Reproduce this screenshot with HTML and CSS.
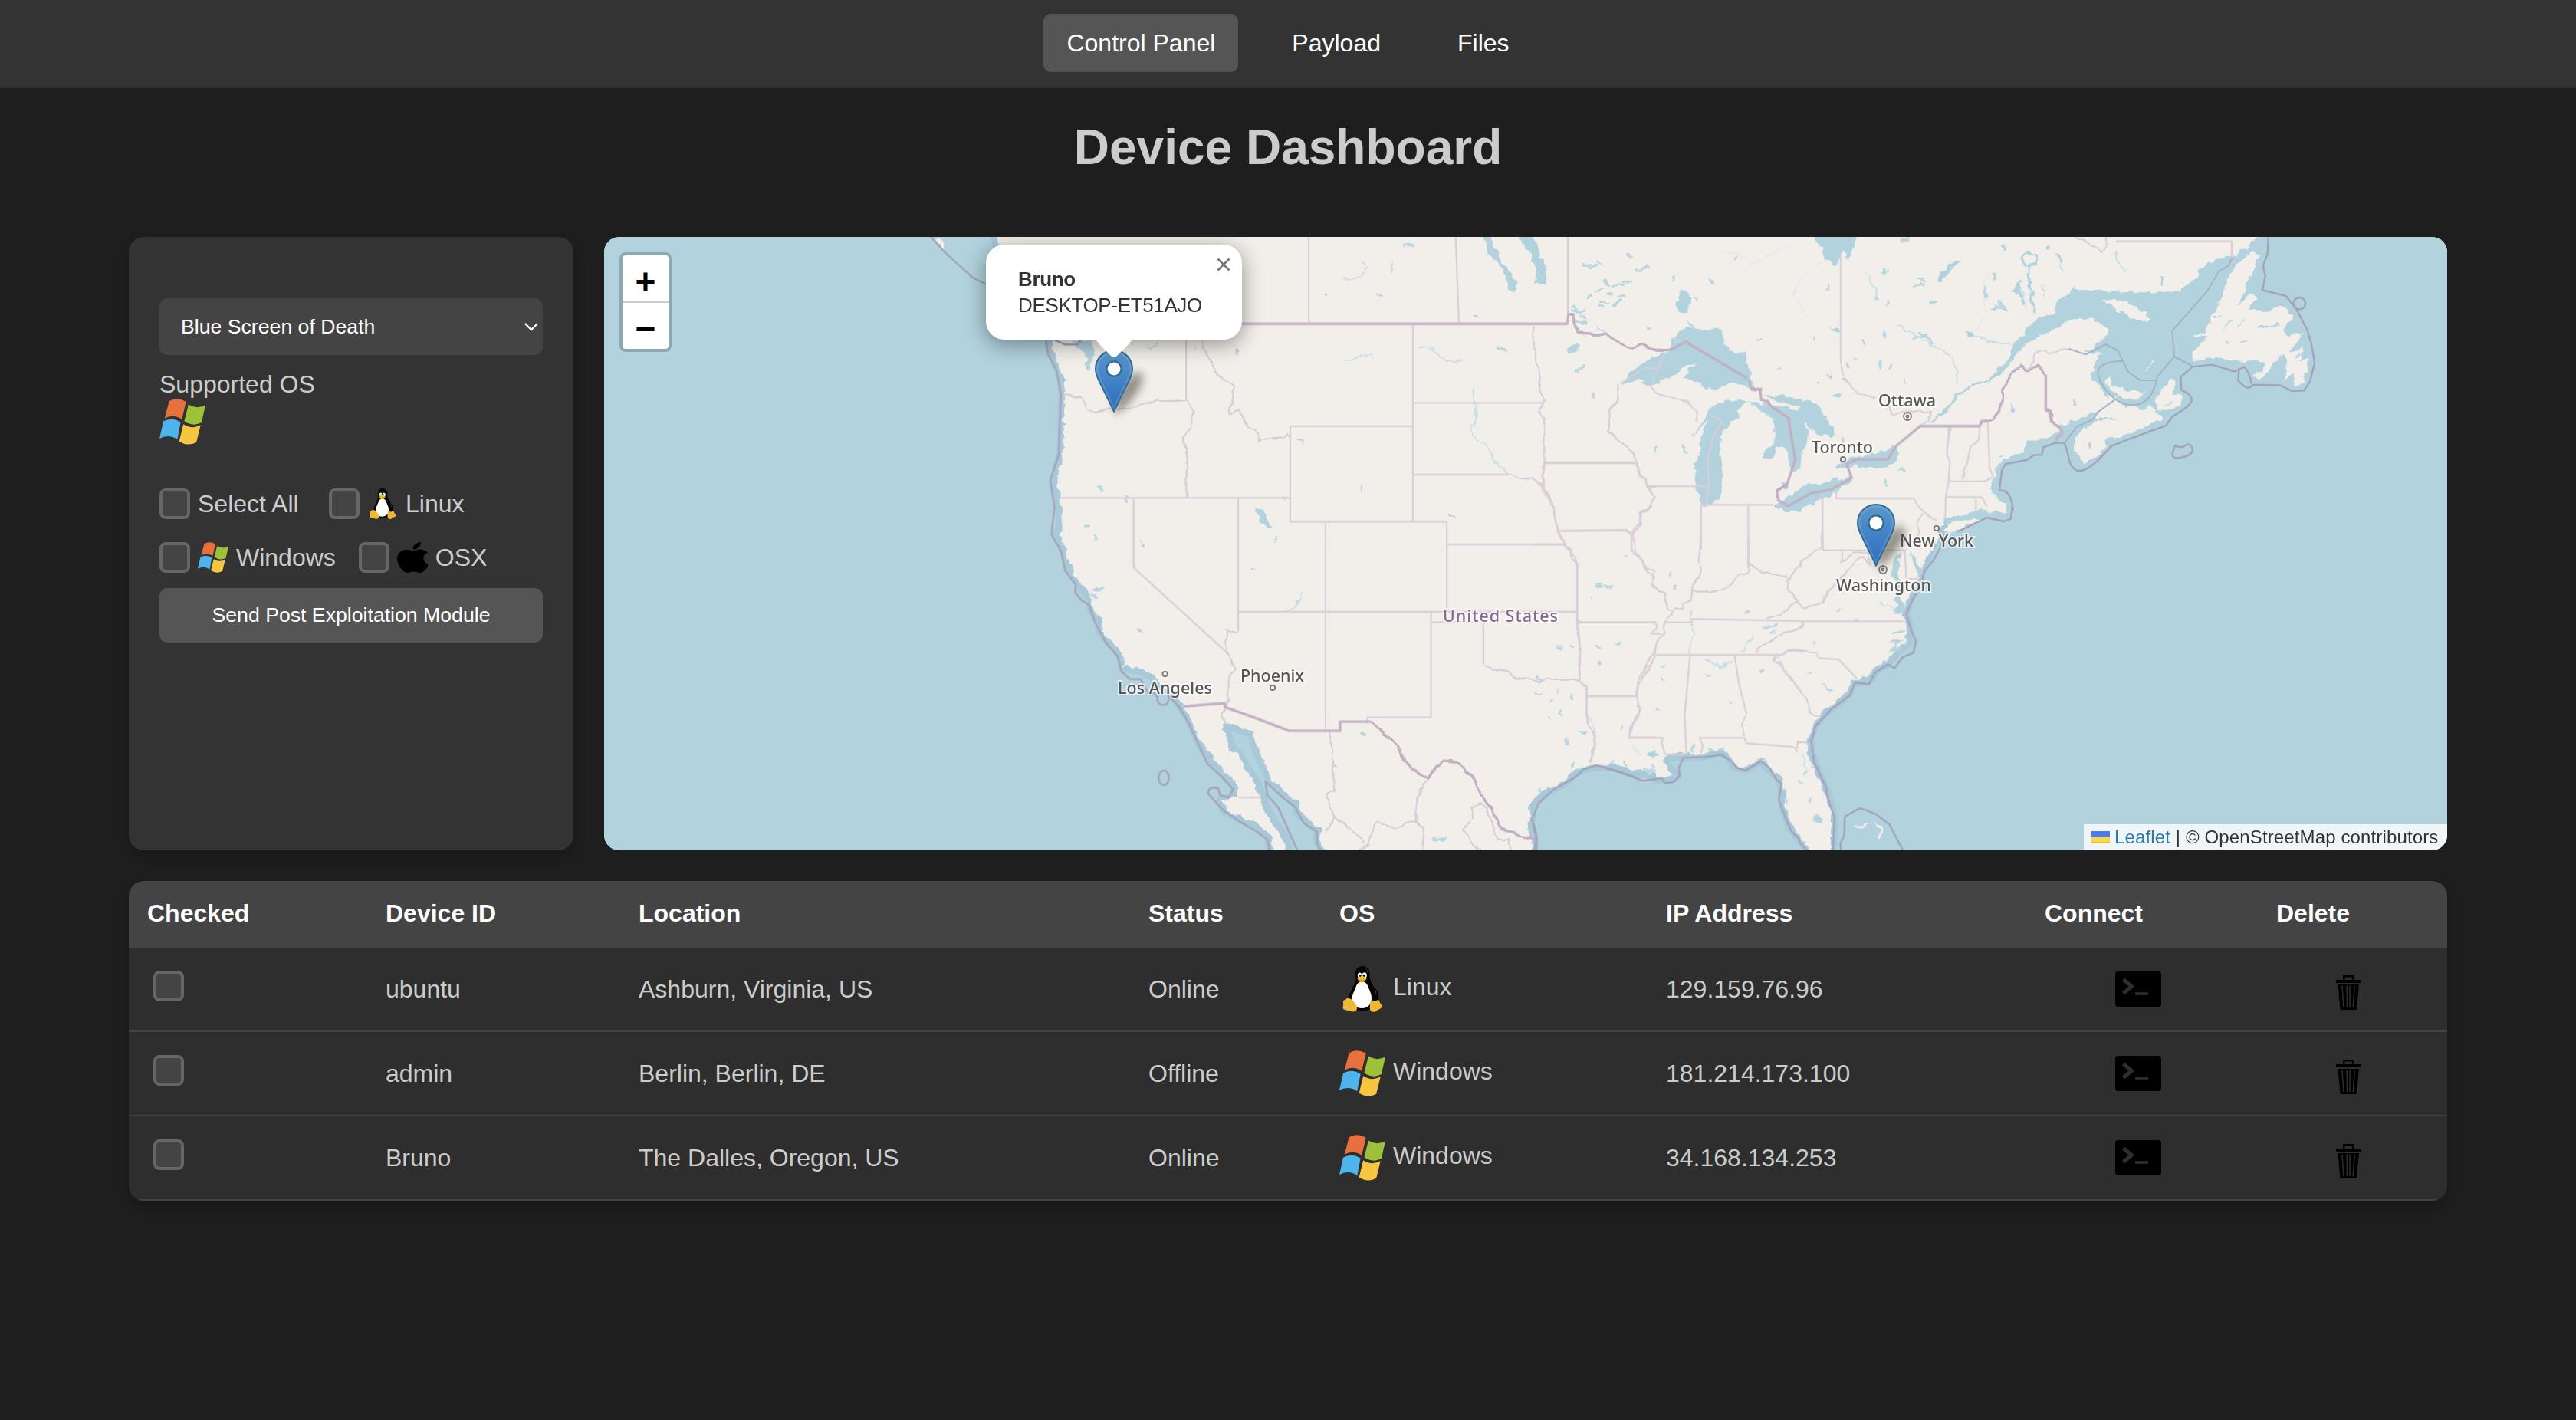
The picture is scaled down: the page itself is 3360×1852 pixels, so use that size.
FILE: index.html
```html
<!DOCTYPE html>
<html lang="en">
<head>
<meta charset="utf-8">
<title>Device Dashboard</title>
<link rel="stylesheet" href="styles.css">
</head>
<body>
<svg class="defs" aria-hidden="true">
  <symbol id="windows" viewBox="0 0 60 60">
    <path fill="#e8703c" d="M12.6 3.2Q23.5-3 34.7 3.9L29.2 26.8Q18 19.5 6.7 25.7Z"/>
    <path fill="#9dc23a" d="M37.9 7.5Q49 14.5 60 8.2L54.9 31Q43.500 37 32.400 29.300Z"/>
    <path fill="#4fb3ec" d="M5.100 29.600Q16.500 23.400 27.600 30.700L23.300 53.200Q12 45.500 0 52.100Z"/>
    <path fill="#f8c540" d="M31.200 33.200Q42.500 40.500 53.700 34.300L48.200 56.800Q37 63 25.700 55.400Z"/>
  </symbol>
  <symbol id="tux" viewBox="0 0 60 60">
    <path fill="#050505" d="M30 0c6 0 9.500 4.500 9.500 10.500 0 5 .5 8 3.500 12 5 7 8.500 13.500 8.500 21 0 9-9 14.500-21.500 14.500S11 54 12 43c.7-7 3.500-11 6.500-17 3-5.500 3-9 2.600-15C20.700 4 24 0 30 0z"/>
    <path fill="#fff" d="M29.500 20c3.500 0 6.500 2 8 7 2 5 4.500 9 4.500 15 0 8-5 13-12.500 13S17 50.500 16.500 43c0-6 3-9.500 4.800-15 1.400-4.500 4-8 8.200-8z"/>
    <ellipse cx="26.500" cy="12" rx="2.700" ry="3.600" fill="#f5f5f5"/><ellipse cx="32.800" cy="12" rx="3" ry="3.800" fill="#f5f5f5"/>
    <circle cx="27.200" cy="12.600" r="1.300"/><circle cx="32" cy="12.600" r="1.400"/>
    <path fill="#f2b91f" d="M23.500 16.500c2-1.800 4.500-3.200 6.200-3 2 .2 5 1.800 6 3-1 2.200-4.200 5-6.500 5s-4.700-2.500-5.700-5z"/>
    <path fill="none" stroke="#a86f0a" stroke-width=".7" d="M24 17.300c2.500 1.800 7.500 2 11 0"/>
    <path fill="#efb736" d="M10.500 42c2.500-.5 5.500.5 8 4 2.500 4 5 6 4.500 9.500-.6 4-4.500 5-9 3.300-4-1.500-8.500-1.300-9.300-3.800-.6-2 1-4 .3-7-.5-3 1-3.500 2.800-4.200 1.200-.6 1.500-1.500 2.700-1.800zM42 42.500c.8 2.800 3.500 4.500 6.500 2.500 1.500-1.500 3.500-1.500 4 1.500.5 2.500 3.500 4.500 3.800 6.200.2 2.300-5 3.300-7.800 5.800-2.500 2-7.500 2-8.500-2-.8-4 .3-8 2-14z"/>
    <path fill="none" stroke="#444" stroke-width=".9" d="M42 20c3 5 5.500 11 6 17M34 3.500c1.800 1 2.700 3 2.700 5"/>
  </symbol>
  <symbol id="apple" viewBox="4 32 366 448" preserveAspectRatio="none">
    <path d="M318.700 268.700c-.2-36.700 16.400-64.400 50-84.800-18.800-26.900-47.200-41.700-84.700-44.600-35.500-2.800-74.300 20.700-88.500 20.700-15 0-49.400-19.700-76.400-19.700C63.300 141.200 4 184.800 4 273.500q0 39.300 14.400 81.200c12.800 36.700 59 126.700 107.200 125.200 25.200-.6 43-17.900 75.800-17.900 31.800 0 48.300 17.900 76.400 17.900 48.600-.7 90.400-82.500 102.600-119.300-65.200-30.700-61.700-90-61.700-91.900zm-56.600-164.200c27.300-32.400 24.800-61.900 24-72.500-24.100 1.400-52 16.400-67.900 34.900-17.500 19.800-27.800 44.300-25.600 71.900 26.100 2 49.900-11.400 69.500-34.300z"/>
  </symbol>
  <symbol id="terminal" viewBox="0 0 60 46">
    <rect width="60" height="46" rx="4"/>
    <path d="M10.500 10.500 21.500 19.500 10.500 28.500" fill="none" stroke="#2e2e2e" stroke-width="5"/>
    <path d="M26 29H43" stroke="#2e2e2e" stroke-width="3.600"/>
  </symbol>
  <symbol id="trash" viewBox="0 0 32 45">
    <path d="M10.300 7V1.300H22.200V7" fill="none" stroke="#000" stroke-width="2.400"/>
    <path d="M0 6H32V10H0zM2.500 12H30L26.800 45H5.500z"/>
    <path d="M8 13.500 10 42M14.200 13.500 14.500 42M18 13.500V42M24.200 13.500 22.200 42" fill="none" stroke="#2e2e2e" stroke-width="1.500"/>
  </symbol>
  <symbol id="pin" viewBox="-1 -1 60 84">
    <path d="M25 1C11.600 1 1 11.600 1 25c0 5 1.700 9.300 3.600 13.800L25 80.500 45.400 38.800C47.300 34.300 49 30 49 25 49 11.600 38.400 1 25 1z" fill="url(#pinfill)" stroke="#2e6c97" stroke-width="2"/>
    <path d="M25 3.200C13 3.200 3.200 13 3.200 25c0 4.600 1.600 8.700 3.400 13L25 75.500 43.400 38c1.800-4.300 3.400-8.400 3.400-13C46.800 13 37 3.200 25 3.200z" fill="none" stroke="#fff" stroke-opacity=".13" stroke-width="2.400"/>
    <circle cx="25" cy="25" r="9.600" fill="#fff" stroke="#2e6c97" stroke-width="2.400"/>
  </symbol>
  <linearGradient id="pinfill" x1="0" y1="0" x2="0" y2="1"><stop offset="0" stop-color="#5a98cb"/><stop offset="1" stop-color="#2b6cbd"/></linearGradient>
</svg>

<nav class="nav">
  <a class="nav-link active">Control Panel</a>
  <a class="nav-link">Payload</a>
  <a class="nav-link">Files</a>
</nav>

<h1 class="title">Device Dashboard</h1>

<main class="content">
  <div class="top">
    <section class="panel">
      <div class="select"><span>Blue Screen of Death</span>
        <svg class="chevron" viewBox="0 0 18 11"><path d="M1.500 1.500 9 9 16.500 1.500" fill="none" stroke="#fff" stroke-width="2.400" stroke-linecap="round"/></svg>
      </div>
      <div class="supported">Supported OS</div>
      <svg class="icon60"><use href="#windows"/></svg>
      <div class="filters">
        <div class="filter-row">
          <label class="filter first"><span class="check"></span>Select All</label>
          <label class="filter"><span class="check"></span><svg class="icon40"><use href="#tux"/></svg>Linux</label>
        </div>
        <div class="filter-row">
          <label class="filter"><span class="check"></span><svg class="icon40"><use href="#windows"/></svg>Windows</label>
          <label class="filter"><span class="check"></span><svg class="icon40"><use href="#apple"/></svg>OSX</label>
        </div>
      </div>
      <div class="send">Send Post Exploitation Module</div>
    </section>

    <section class="map">
      <svg class="map-canvas" viewBox="788 309 2404 800">
        <defs>
          <filter id="rough" x="-2%" y="-2%" width="104%" height="104%" color-interpolation-filters="sRGB">
            <feTurbulence type="fractalNoise" baseFrequency=".09" numOctaves="3" seed="4"/>
            <feDisplacementMap in="SourceGraphic" scale="10" xChannelSelector="R" yChannelSelector="G"/>
          </filter>
          <filter id="wobble" x="-2%" y="-2%" width="104%" height="104%" color-interpolation-filters="sRGB">
            <feTurbulence type="fractalNoise" baseFrequency=".06" numOctaves="2" seed="9"/>
            <feDisplacementMap in="SourceGraphic" scale="8" xChannelSelector="R" yChannelSelector="G"/>
          </filter>
          <path id="west" d="M34 10 60 120 165 272 168 300 180 340 190 365 195 410 193 430 192 500 190 560 182 590 175 625 182 668 188 700 188 740 180 760 195 790 205 830 225 870 240 890 255 915 262 950 282 970 280 1000 310 1035 325 1050 333 1085 375 1095 400 1110 420 1135 445 1155 462 1170 470 1190 485 1215 500 1250 510 1275 525 1300 545 1325 565 1350 590 1375 598 1410 580 1420 560 1425 570 1445 600 1462 640 1480 670 1505 680 1560H712L700 1515 680 1485 655 1440 648 1410 635 1380 610 1340 595 1310 580 1300 570 1270 563 1230 580 1228 600 1240 632 1250 638 1280 650 1310 665 1345 672 1365 690 1385 715 1410 735 1425 740 1450 770 1480 790 1495 785 1520 810 1560H1275L1280 1520 1268 1490 1275 1460 1270 1445 1285 1415 1310 1390 1345 1370 1375 1345 1400 1332 1430 1325 1470 1330 1510 1345 1568 1355V10Z"/>
          <path id="southeast" d="M-20-40H1190L1165 20 1150 60 1130 130 1120 190 1095 240 1080 300 1090 340V410L1060 440 1030 490 1000 510 980 550 930 565 915 610 880 650 835 700 815 740 802 790 805 850 825 920 850 1000 865 1060 873 1130 865 1250H820L790 1190 755 1130 735 1050V990L725 940 690 900 670 865 650 875 625 900 595 895 570 850 545 835 490 850 450 848 385 855 375 880 390 910 412 935 360 940 340 915 300 920 250 895 190 890 160 895 120 915 85 960 35 990-20 1030Z"/>
        </defs>
        <rect class="sea" x="780" y="300" width="2420" height="820"/>
        <g class="shelf">
          <g transform="translate(1280 300) scale(.56122 .52296)"><use href="#west"/></g>
          <g transform="translate(2000 700) scale(.44643 .33333)"><use href="#southeast"/></g>
        </g>
        <g class="land" filter="url(#rough)">
          <g transform="translate(1280 300) scale(.56122 .52296)"><use href="#west"/></g>
          <g transform="translate(2000 700) scale(.44643 .33333)">
            <use href="#southeast"/>
            <path d="M935 1135 955 1125 985 1122 980 1130 945 1137ZM1000 1110 1020 1135 1018 1180 1010 1180 1012 1145Z"/>
          </g>
          <g transform="translate(2000 300) scale(.44643 .33333)">
            <path d="M-20 0H1568V760L1530 765 1510 800 1440 830 1430 870 1380 890 1350 930 1345 980 1335 1010 1355 1055 1385 1070V1110L1310 1095 1200 1130 1185 1170 1180 1210 1170 1250 1150 1280 1130 1340H-20Z"/>
            <path d="M1195 1180 1220 1145 1300 1130 1310 1138 1230 1180Z"/>
          </g>
          <g transform="translate(2600 300) scale(.39541 .33333)">
            <path d="M-40 0H890L840 70 785 105 740 115 680 150 670 190 620 235 520 250 440 240 300 235 245 235 210 280 200 330 140 345 90 410 50 470-40 600Z"/>
            <path d="M-20 610 50 530 80 470 140 410 200 375 260 345 320 345 375 385V415L320 470 290 478 355 475 340 520 320 565 345 600 370 645 400 660 440 690 500 700 515 688 540 710 560 740 500 770 410 815 375 810 370 850 300 915 265 860 270 810 330 750 410 733 335 735 345 712 280 745 220 760 215 790 160 820 100 830 40 880 20 920-20 950Z"/>
            <path d="M360 270 410 275 480 305 520 350 510 358 460 350 410 310ZM385 570 390 610 440 630 500 630 470 670 400 640 365 600ZM590 570 600 590 590 640 625 650 620 680 575 710 540 700 535 660 560 620Z"/>
            <path d="M855 90 880 95 865 130 830 230 810 290 845 250 875 270 840 310 900 320 950 295 990 340 960 390 970 420 1020 405 1000 440 975 480 1025 460 1010 520 1040 500 1025 605H985L990 560 955 590 970 540 960 490 920 520 890 575 850 580 880 550 900 520 850 515 800 510 720 500 665 510 655 480 710 420 665 418 670 405 695 410 720 330 740 300 770 200 810 120Z"/>
          </g>
          <path d="M1219 312 1228 312 1232 326 1226 324Z"/>
        </g>

        <g class="lakes" filter="url(#rough)">
          <g transform="translate(1280 300) scale(.56122 .52296)">
            <path d="M640 690 655 700 662 722 682 738 665 745 645 722ZM1165 10 1180 60 1215 100 1225 150 1245 150 1245 125 1215 85 1190 40 1185 10ZM1245 10 1275 60 1290 100 1290 135 1312 138 1312 90 1290 50 1280 10ZM1360 295 1375 285 1390 290 1375 305ZM210 276 255 276 262 300 252 350 240 352 248 320 232 300Z"/>
            <path d="M1548 1300 1568 1295V1312L1550 1312ZM370 770 378 785 374 792ZM350 828 357 832 354 842ZM590 295 597 300 592 318Z"/>
          </g>
          <g transform="translate(2000 300) scale(.44643 .33333)">
            <path d="M800 0 845 65 850 115 882 138 905 85 925 120 945 20Z"/>
            <path d="M255 600 300 540 350 495 400 470 405 430 445 375 500 390 548 392 565 460 600 480 625 475 622 520 638 545 632 580 645 590V620L610 605 570 600 535 625 500 620 485 595 440 585 455 545 480 525 445 530 405 580 370 595 340 610 318 600 325 580 290 595Z"/>
            <path d="M465 810 520 690 570 665 610 665 625 680 600 700V735L570 770 550 790 545 860 555 950 550 1030 520 1080 490 1075 475 1000 470 930 490 850 495 790 510 740 490 770Z"/>
            <path d="M620 675 670 680 690 690 740 690 770 710 785 690 830 680 860 750 885 790 870 815 820 790 785 740 805 790 800 840 785 870 780 930 755 955 745 900 735 850 710 850 700 890 675 890V865L700 840 705 770 700 740 680 720 650 690ZM670 640 720 650 770 660 830 680 790 690 720 670Z"/>
            <path d="M700 1075 730 1060 790 1000 820 990 850 990 880 975 925 965V985L870 1040 800 1080 780 1100 745 1105 715 1090ZM728 990 745 1000 740 1018 722 1010ZM880 935 915 900 960 880 1010 870 1050 840 1065 860V905L1035 930 980 930 930 925Z"/>
            <path d="M430 235 455 240 460 290 450 320 425 315 412 285 425 275ZM1585 220 1530 280 1520 330 1480 340 1440 390 1405 445 1390 500 1355 550 1335 580 1360 572 1395 520 1420 470 1470 420 1520 385 1585 345Z"/>
            <path d="M1180 200 1195 155 1235 115 1245 125 1215 165 1190 205ZM98 465 130 450 128 475 100 480ZM1265 395 1290 405 1280 425 1268 415ZM865 375 880 385 905 400 880 400ZM870 640 900 640 885 652ZM1400 240 1420 200 1425 260ZM10 120 30 110 38 180 20 220 8 200Z"/>
            <path d="M0 30 15 80 20 120 5 110-20 60ZM1210 770 1218 775 1214 830ZM1060 1270 1075 1265 1062 1340 1050 1340Z"/>
          </g>
          <g transform="translate(2000 700) scale(.44643 .33333)">
            <path d="M1070 70 1058 105 1068 150 1075 190 1068 230 1085 265 1082 305 1045 290 1068 270 1055 235 1062 200 1048 140 1052 100ZM1100 50 1112 90 1135 125 1128 150 1105 100ZM818 1100 832 1085 843 1105 830 1122ZM340 845 355 838 372 855 345 862ZM1030 450 1085 405 1040 410 1080 440ZM1045 375 1090 365 1060 382Z"/>
          </g>
        </g>

        <g class="streams" filter="url(#rough)">
          <g transform="translate(1280 300) scale(.56122 .52296)">
            <path d="M1143 390 1148 460 1140 510 1180 545 1195 580 1225 608M1020 292 1050 298 1080 330 1118 325M840 122 880 118 900 95 885 80M953 75V105M845 330 880 315 905 305 912 325M745 905 728 940 705 952M412 270 398 300 385 290M495 290 500 300"/>
          </g>
          <g transform="translate(2000 300) scale(.44643 .33333)">
            <path class="bold" d="M1340 580 1280 610 1235 650 1210 700 1160 750"/>
            <path d="M1060 370 1180 460 1230 500 1240 600M1290 415 1330 430 1395 455M1450 140 1448 250 1465 330M1425 200 1430 260 1440 300M980 180 1002 230V270"/>
            <path class="thin" d="M845 120 780 200 760 250 800 340M550 75 600 95 640 135 690 100 760 50M930 130 980 180M1320 150V330L1290 400"/>
          </g>
          <g transform="translate(2000 700) scale(.44643 .33333)">
            <path d="M460 290 465 380 455 460M500 480 550 510 585 480M640 385 610 450M165 710 182 770M790 840 795 920M710 470 760 570M1010 262 1050 280"/>
            <path class="thin" d="M280 790 310 860"/>
          </g>
          <g transform="translate(2600 300) scale(.39541 .33333)">
            <path class="bold" d="M95 110Q100 85 120 85T145 110 122 140 95 110M118 140 122 230 135 320M90 200 85 240 100 290"/>
            <path d="M215 100 228 165M400 90 430 170M165 210V260M810 380 830 350M755 390 790 345M570 690 590 670"/>
            <path d="M505 548 535 510" stroke="#f2efea"/>
          </g>
        </g>

        <g class="ponds" filter="url(#rough)">
          <g transform="translate(1280 300) scale(.56122 .52296)">
            <path d="M985 37l20 2M1200 295l16 4M1365 300l20-8M1385 350l15-6M1420 408l6 4M740 525l8 4M920 158l10 4M275 640l5 8M337 665v12M685 765v12M630 842l6 3M705 665l3 8M365 998l6 2M255 905l12 16M1340 1045l10-8M1300 1120l10 4M1290 1155h10M1360 1275l6 8M1390 1245l16 10M1050 1520h30M880 1255l12 2M1090 710l8 4M1400 85h14M1430 150l14-4M1490 130h20M1525 100l30-8M1440 175l20 6M1470 190l12-14M1500 60l10 10M1375 200l25 0M1385 225l20 8M1410 170l8-8M797 160h4M1145 215h10M263 895l20 0M240 738h8M265 763v8M820 1338h4M885 640v8M1390 975l5 4M1425 885l20 5"/>
          </g>
          <g transform="translate(2000 300) scale(.44643 .33333)">
            <path d="M190 125l8 12M165 145l20-4M300 160l40-18M205 200l20 14M235 220l30-5M215 250l12 6M190 290l15 8M250 260h20M120 300l15 16M140 330l12 14M115 350l20 8M190 380l14 10M330 375l10 6M410 180v12M470 265l6 8M520 198v8M590 100v6M860 215v18M140 545l10-18M175 640v10M440 850l4 24M1070 937l16 4M1080 35h16M1375 65v20M1025 150v30M1020 170l14-10M1345 170v20M1125 190l16 8M1110 215l30-4M1165 280h10M1130 400l10 14M1110 425l40-14M1150 420l10 16M1340 310l30-10M1360 290l20 30M960 435l6 6M935 507h10M915 530l8 4M1015 515v24M1045 530v14M865 560l4 20M835 598h4M1085 585v8M1025 400v20M820 420v8M1000 270l8 8M1035 280v10M905 580l18 20M1398 690l4 20M1030 970l4 30M360 850v14M905 815v14M655 430l10-4M1320 220v40M1500 60v8M455 365l12 12M420 425v12M715 545h6"/>
          </g>
          <g transform="translate(2000 700) scale(.44643 .33333)">
            <path d="M180 185h20M210 190l14 6M172 238v6M70 430l10 10M110 430l6 2M185 430l10 6M190 494h8M245 415l10 3M400 142v8M415 195v8M380 505v4M375 555h6M505 540h8M670 520v6M800 538h6M850 575l20 28M572 640v6M362 670v4M822 410v8M940 322l14 10M620 298l12-4M670 355l40-8M695 375l8-2M140 760l12 16M95 795l6 18M45 708v4M55 635v6M10 550l16 6M80 685v10M110 620v8M255 745v4M890 285h4M270 75h6M465 820v18M115 890v16M230 880v10M265 885l10 14M325 910l30 10M350 890v10M515 830l10 8M540 832h12M735 1030l8 10M790 920v8M780 960l6 6M808 1028v6M20 985v12M70 600v4"/>
          </g>
          <g transform="translate(2600 300) scale(.39541 .33333)">
            <path d="M30 65l8 20M175 60l8 8M215 100l6 20M0 185l6 10M60 685l6 24M10 300l30 10M20 280l14 20M555 185v24M270 670v16M320 840v8M820 440h10M770 438h6M20 880v6M80 240v14M880 380l60-6M1000 490l12 0M730 345l20-8"/>
          </g>
        </g>

        <g class="states">
          <g transform="translate(1280 300) scale(.56122 .52296)">
            <path d="M761 10V232M1102 10 1110 232M1363 10V209M476 272V420M182 668H718M354 668V842L572 1055M597 668V1000M597 952H1385M1003 489H718V727H1082V952M1003 236V727M800 727V1248M1003 431H1306M1003 610H1225M1083 784H1355M1309 580H1520M1338 750 1500 748 1512 760M1385 832V1000M1385 978H1568M1045 952V1215H897V1226M1043 978H1167V1082M1407 1135V1215M1407 1162H1523M1506 1265H1568M598 1415H648M1545 640H1568"/>
          </g>
          <g transform="translate(2000 300) scale(.44643 .33333)">
            <path d="M898 90V520M343 612 385 480M255 600 325 540H365M28 912H297M335 1002H510M553 745 525 810 510 890 513 1002 505 1075M515 725 553 745M490 1075H700M490 1075V1250M628 1075V1320M845 1030V1253H1090M885 1005V1050H1110M1215 767 1208 880 1217 905 1213 985 1205 1045 1203 1130M1328 745 1333 930 1345 970M1217 983H1320L1340 968M1205 1045H1310L1325 1080M1293 1050V1105M70 1178 270 1175 290 1195M0 1230H90"/>
          </g>
          <g transform="translate(2000 700) scale(.44643 .33333)">
            <path d="M128 105V335L135 400V560M128 335H357L362 355 344 379H374M158 624H303M155 580V705M281 787H378L375 807 385 852M490 0 483 100M628 0V105M388 335H463V322L685 327 788 330H1082M355 462H715M458 462 442 700 447 850M588 462 600 570 622 690M618 787H485L495 817 490 847M618 787 622 808 760 822M832 475 892 480 945 555M1085 55 1090 165H1130M845 0V53M385 852 440 852"/>
          </g>
          <g transform="translate(2600 300) scale(.39541 .33333)">
            <path d="M405 44H786V110"/>
          </g>
        </g>
        <g class="states" filter="url(#wobble)">
          <g transform="translate(1280 300) scale(.56122 .52296)">
            <path d="M514 272 516 295 530 325 545 352 570 375 587 387 585 420 576 440 578 458 600 448 612 480 635 500 645 525 665 518 700 515 712 508 718 520M476 420 480 428 497 450 490 480 470 515 472 535 478 545 476 668M190 410 230 418 245 445 265 455 300 445 340 445 370 435 400 428 478 428M597 1000 592 1005 570 997V1022L572 1055 592 1097 577 1112 572 1142 577 1172 565 1185M1225 608 1250 622 1280 620 1308 638M1281 236 1285 290 1295 350 1300 400 1306 430 1296 450 1308 470 1309 580 1303 590 1306 635 1325 680 1338 750 1355 784 1372 800 1370 815 1385 832M1385 1000 1392 1040 1390 1130M1167 1082 1192 1097 1222 1102 1247 1117 1277 1122 1297 1130 1317 1118 1342 1123 1372 1121 1392 1131 1407 1139M1407 1215 1428 1265 1420 1300 1415 1330M1568 1060 1545 1100 1525 1150 1530 1200 1508 1240 1506 1265M1478 385V425L1458 450 1460 505 1485 530 1518 560 1524 590 1550 640 1565 670 1555 695 1530 710 1532 735 1512 760 1520 800 1545 845 1568 870M808 1250 818 1300 818 1360 820 1400 800 1405 820 1465 840 1475 862 1500 890 1530M820 1465 800 1500M1038 1370 1010 1415 1012 1475 990 1480 960 1490 920 1478 900 1530 875 1547M1012 1475 1030 1490 1025 1547M1120 1495 1145 1470 1140 1440 1160 1430 1175 1440 1185 1480 1200 1520 1225 1520 1228 1547M1120 1495 1135 1520 1160 1547M565 1185 560 1210 568 1232"/>
          </g>
          <g transform="translate(2000 300) scale(.44643 .33333)">
            <path d="M898 520 905 570 940 635 1000 655M1040 690 1045 715 1160 710 1155 750 1130 767M1437 550 1460 520 1465 480 1500 470 1510 480 1568 465M343 612 360 640 450 675 475 710 480 750M297 912 305 940 335 1000 355 1050 345 1085 308 1110 312 1140 285 1190 285 1250 330 1320M1110 1050 1130 1095 1180 1140M1135 1110 1120 1150 1130 1180 1120 1220M1305 767 1300 820 1280 850 1262 930 1255 980M0 975 25 1000 45 1060 62 1110 70 1180 90 1230 110 1250 130 1310M845 1170 835 1250 785 1290 780 1320M33 912 25 960 28 990"/>
          </g>
          <g transform="translate(2000 700) scale(.44643 .33333)">
            <path d="M330 120 355 130 345 185 385 230 395 285 410 290 400 320 385 335 380 380 360 410 355 450 335 490 310 560 300 610 315 680 285 750 281 787M483 100 490 140 465 215 460 250 440 260V285L410 275M465 215 530 215 570 200 600 150 628 140 630 105 670 140 740 155 745 170 775 120 785 90M685 325 720 310 770 250 745 210 740 170M770 250 790 275 850 255 860 215 900 150 960 80 985 105 975 60 935 65 900 100V55M788 330 785 350 720 385 655 440 652 460M622 690 612 740 618 787M760 822 768 840 770 802 805 810M715 462 702 480 725 510 790 620 820 700 835 702M715 462 755 443 825 455 832 475M155 705 182 780 170 880"/>
          </g>
          <g transform="translate(2600 300) scale(.39541 .33333)">
            <path d="M250 10 275 35 295 35 320 65 345 70 360 88 375 65 370 40 380 10"/>
          </g>
        </g>

        <g class="nation">
          <g transform="translate(1280 300) scale(.56122 .52296)"><path d="M600 234H1363M470 1188 565 1180 567 1190 640 1218 715 1249H834V1226H905"/></g>
          <g transform="translate(2000 300) scale(.44643 .33333)"><path d="M400 470 445 437 625 580M695 690 745 735 765 900 745 980M713 1055 745 1080 810 1030 870 1015 930 970 915 915 945 897H1035L1060 845 1130 767H1305M1497 565V700"/></g>
        </g>
        <g class="nation" filter="url(#wobble)">
          <g transform="translate(1280 300) scale(.56122 .52296)"><path d="M905 1226 970 1285 982 1325 1038 1368 1055 1335 1075 1325 1110 1328 1140 1365 1160 1410 1185 1440 1205 1490 1245 1510 1288 1518"/></g>
          <g transform="translate(2000 300) scale(.44643 .33333)"><path d="M98 367 100 330H118L128 395 175 415 210 405 245 440 290 465 318 450 370 470 400 470M625 580 640 625 662 620 665 660 690 665 695 690M745 980 740 1000 715 1020 713 1055M1305 767 1310 745 1345 740 1368 690 1370 640 1385 595 1422 525 1437 550 1475 535 1497 565M1497 700 1512 710 1515 750 1535 765 1540 795 1525 830"/></g>
        </g>

        <g class="waters">
          <g transform="translate(1280 300) scale(.56122 .52296)">
            <path d="M150 275 155 310 175 350 185 410 180 560 160 625 170 690 163 760 185 800 195 850 220 885 218 905 235 925 250 935 265 980 290 1030 318 1065 325 1100 345 1120 370 1120 385 1150 408 1158Q408 1185 422 1185T436 1163L460 1190 480 1225 510 1295 525 1330 560 1365 585 1395 575 1415 555 1410 550 1392Q527 1386 527 1405L560 1445 600 1475 640 1500 665 1520 672 1560M740 1560 715 1500 690 1440 665 1410 660 1375 675 1390 700 1415 730 1440 750 1480 780 1500V1530L795 1560M1285 1560 1290 1515 1280 1470 1295 1430 1330 1395 1380 1365 1400 1345 1430 1335 1475 1348 1520 1365"/>
            <ellipse cx="424" cy="1366" rx="12" ry="18"/>
          </g>
          <g transform="translate(780 300) scale(.56122 .33333)"><path d="M765 10 805 85 870 185 905 215M1062 430 1085 448 1115 448 1122 432"/></g>
          <g transform="translate(2000 700) scale(.44643 .33333)">
            <path d="M10 1250 8 1160 0 1120M210 905 260 925 320 955 375 945 385 965 410 960 428 935 425 905 438 865 500 862 550 853 580 880 595 905 620 915 665 878 690 905 710 950 725 965 717 1030 740 1110 755 1155 775 1180 780 1200 805 1235M1190 40 1170 90 1140 140 1135 185 1110 240 1090 300 1100 350 1118 410 1110 455 1080 470 1055 515 1035 500 1000 530 980 578 940 570 925 620 870 675 825 740 812 800 820 880 855 980 860 1020 880 1100 875 1240M900 1240 897 1200 908 1170 910 1095 955 1062 1000 1085 1040 1125 1085 1240"/>
          </g>
          <g transform="translate(2000 300) scale(.44643 .33333)"><path d="M1400 1075 1395 1130 1375 1140 1325 1125 1240 1180M1200 1190 1190 1240"/></g>
          <g transform="translate(2600 300) scale(.39541 .33333)">
            <path d="M908 10 905 90 890 140 897 180 888 235 965 258 1000 310 1035 390 1050 450 1060 520 1045 590 1025 628 985 630 945 607 855 605Q850 617 840 617T808 590L810 545 795 553 760 540 720 527 657 535 618 575 620 625Q655 645 655 665T590 730L570 765 440 822 390 845 350 895Q310 942 285 942T250 900L245 870 235 833H205L165 850 160 880 135 880 110 900 40 915 28 940 20 1020Q45 1015 55 1045T65 1100M810 545 828 535 842 560 852 600"/>
            <ellipse cx="1010" cy="287" rx="20" ry="23"/>
            <path d="M625 850 640 838Q657 840 657 860T620 890 593 865 605 847Z"/>
          </g>
        </g>
        <g class="waters faint">
          <g transform="translate(2600 300) scale(.39541 .33333)">
            <path d="M788 110 775 140 745 160 705 240 590 395 597 495 540 575 538 588H485L445 555 410 470 370 447 305 487 250 465M597 495 657 533M538 588Q520 685 460 685T357 600 427 512M235 833 275 770 330 740 345 712 400 665"/>
          </g>
        </g>

        <g class="towns">
          <circle cx="1519.600" cy="879" r="3.200"/><circle cx="1660" cy="897" r="3.200"/><circle cx="2404" cy="599" r="3.200"/><circle cx="2526" cy="689" r="3.200"/>
          <circle cx="2488" cy="543" r="5"/><circle cx="2488" cy="543" r="1.500"/><circle cx="2456" cy="743" r="5"/><circle cx="2456" cy="743" r="1.500"/>
        </g>
        <g class="labels">
          <text x="1458" y="905" textLength="123">Los Angeles</text>
          <text x="1618" y="889" textLength="83">Phoenix</text>
          <text x="2450" y="530" textLength="75">Ottawa</text>
          <text x="2363" y="591" textLength="80">Toronto</text>
          <text x="2478" y="713" textLength="96">New York</text>
          <text x="2395" y="771" textLength="124">Washington</text>
          <text class="country" x="1882" y="811" textLength="150">United States</text>
        </g>
      </svg>

      <div class="zoom"><span>+</span><span>−</span></div>
      <i class="pin-shadow ps-west"></i>
      <i class="pin-shadow ps-east"></i>
      <svg class="pin pin-west"><use href="#pin"/></svg>
      <svg class="pin pin-east"><use href="#pin"/></svg>
      <div class="popup">
        <b>Bruno</b><span>DESKTOP-ET51AJO</span>
        <svg class="close" viewBox="0 0 18 18"><path d="M1.500 1.500 16.500 16.500M16.500 1.500 1.500 16.500" stroke="#757575" stroke-width="2.500"/></svg>
      </div>
      <svg class="tip" viewBox="0 0 56 28"><path fill="#fff" d="M0 0C5 1 7 4 9 7L24.500 22.500Q28 26 31.500 22.500L47 7C49 4 51 1 56 0Z"/></svg>
      <div class="attribution">
        <svg class="flag" viewBox="0 0 24 16"><path fill="#4c7be1" d="M0 0h24v8H0z"/><path fill="#fad648" d="M0 8h24v6H0z"/><path fill="#dcbf3c" d="M0 14h24v2H0z"/></svg>
        <span class="credit"><a>Leaflet</a> | © OpenStreetMap contributors</span>
      </div>
    </section>
  </div>

  <div class="table-wrap">
    <table class="devices">
      <colgroup><col class="c1"><col class="c2"><col class="c3"><col class="c4"><col class="c5"><col class="c6"><col class="c7"><col class="c8"></colgroup>
      <thead><tr><th>Checked</th><th>Device ID</th><th>Location</th><th>Status</th><th>OS</th><th>IP Address</th><th>Connect</th><th>Delete</th></tr></thead>
      <tbody>
        <tr><td><span class="check"></span></td><td>ubuntu</td><td>Ashburn, Virginia, US</td><td>Online</td>
          <td><div class="os"><svg class="icon60"><use href="#tux"/></svg><span>Linux</span></div></td><td>129.159.76.96</td>
          <td><svg class="terminal"><use href="#terminal"/></svg></td><td><svg class="trash"><use href="#trash"/></svg></td></tr>
        <tr><td><span class="check"></span></td><td>admin</td><td>Berlin, Berlin, DE</td><td>Offline</td>
          <td><div class="os"><svg class="icon60"><use href="#windows"/></svg><span>Windows</span></div></td><td>181.214.173.100</td>
          <td><svg class="terminal"><use href="#terminal"/></svg></td><td><svg class="trash"><use href="#trash"/></svg></td></tr>
        <tr><td><span class="check"></span></td><td>Bruno</td><td>The Dalles, Oregon, US</td><td>Online</td>
          <td><div class="os"><svg class="icon60"><use href="#windows"/></svg><span>Windows</span></div></td><td>34.168.134.253</td>
          <td><svg class="terminal"><use href="#terminal"/></svg></td><td><svg class="trash"><use href="#trash"/></svg></td></tr>
      </tbody>
    </table>
  </div>
</main>
</body>
</html>
```
FILE: styles.css
```css
* { box-sizing: border-box; }
body {
  margin: 0;
  min-height: 1852px;
  background: #1e1e1e;
  color: #ccc;
  font: 32px/37px "Liberation Sans", Arial, sans-serif;
}
svg { display: block; }
.defs { position: absolute; width: 0; height: 0; }

.nav {
  display: flex;
  justify-content: center;
  gap: 40px;
  height: 115px;
  padding-top: 18px;
  background: #333;
}
.nav-link {
  height: 76px;
  padding: 20px 30px;
  border-radius: 10px;
  color: #fff;
}
.nav-link.active { background: #555; }

.title {
  margin: 40px 0 80px;
  font-size: 64px;
  line-height: 74px;
  text-align: center;
}

.content { width: 3024px; margin: 0 auto; }
.top { display: flex; gap: 40px; height: 800px; margin-bottom: 40px; }

.panel {
  width: 580px;
  padding: 80px 40px 0;
  border-radius: 20px;
  background: #333;
  box-shadow: 0 8px 16px rgba(0, 0, 0, .2);
}
.select {
  display: flex;
  align-items: center;
  justify-content: space-between;
  height: 74px;
  padding: 0 6px 0 28px;
  border-radius: 10px;
  background: #444;
  color: #fff;
  font-size: 26.667px;
}
.chevron { width: 18px; height: 11px; }
.supported { margin-top: 20px; }
.icon60 { flex: none; width: 60px; height: 60px; }
.icon40 { flex: none; width: 40px; height: 40px; }
.filters { display: grid; gap: 30px; margin-top: 57px; }
.filter-row { display: flex; gap: 30px; height: 40px; }
.filter { display: flex; align-items: center; gap: 10px; }
.filter.first { width: 191px; }
.check {
  flex: none;
  width: 40px;
  height: 40px;
  border: 4px solid #666;
  border-radius: 8px;
  background: #444;
}
.send {
  height: 71px;
  margin-top: 20px;
  border-radius: 10px;
  background: #555;
  color: #fff;
  font-size: 26.667px;
  line-height: 70px;
  text-align: center;
}

.map {
  position: relative;
  flex: 1;
  overflow: hidden;
  border-radius: 20px;
  background: #b2d2dd;
}
.map-canvas { width: 2404px; height: 800px; }
.map-canvas path, .map-canvas ellipse, .map-canvas use { vector-effect: non-scaling-stroke; }
.sea { fill: #b2d2dd; }
.shelf { fill: none; stroke: #a9c8d8; stroke-width: 17px; stroke-linejoin: round; }
.land { fill: #f2efea; }
.lakes { fill: #b2d2dd; }
.streams { fill: none; stroke: #c9dfe4; stroke-width: 2px; }
.streams .bold { stroke: #b2d2dd; stroke-width: 3px; }
.streams .thin { stroke: #e4ebe9; }
.ponds { fill: none; stroke: #b9d7e0; stroke-width: 3.2px; stroke-linecap: round; }
.states { fill: none; stroke: #d9cdd8; stroke-width: 2.2px; stroke-linejoin: round; }
.nation { fill: none; stroke: #c2b0c4; stroke-width: 3.4px; stroke-linejoin: round; }
.waters { fill: none; stroke: #a3a3bc; stroke-width: 2.4px; stroke-linejoin: round; }
.waters.faint { stroke: #a5b3c9; stroke-width: 2px; }
.towns { fill: none; stroke: #777; stroke-width: 1.8px; }
.labels {
  fill: #555;
  stroke: rgba(255, 255, 255, .65);
  stroke-width: 4px;
  paint-order: stroke;
  font: 500 21.5px "Noto Sans", sans-serif;
}
.labels .country { fill: #866a8e; }

.zoom {
  position: absolute;
  top: 20px;
  left: 20px;
  width: 68px;
  border: 4px solid rgba(0, 0, 0, .2);
  border-radius: 8px;
  background-clip: padding-box;
  color: #000;
  font-size: 46px;
  font-weight: bold;
  text-align: center;
}
.zoom span { display: block; height: 60px; line-height: 68px; background: #fff; border-radius: 0 0 4px 4px; }
.zoom span:first-child { height: 62px; border-bottom: 2px solid #ccc; border-radius: 4px 4px 0 0; }

.pin { position: absolute; width: 60px; height: 84px; }
.pin-west { left: 639px; top: 146px; }
.pin-east { left: 1633px; top: 347px; }
.pin-shadow {
  position: absolute;
  width: 20px;
  height: 62px;
  border-radius: 50% 50% 50% 50% / 35% 35% 65% 65%;
  background: rgba(50, 45, 35, .5);
  filter: blur(6px);
  transform: rotate(33deg);
  transform-origin: 50% 100%;
}
.ps-west { left: 656px; top: 167px; }
.ps-east { left: 1650px; top: 368px; }

.popup {
  position: absolute;
  left: 498px;
  top: 10px;
  width: 334px;
  height: 124px;
  padding: 28px 42px;
  border-radius: 24px;
  background: #fff;
  box-shadow: 0 6px 28px rgba(0, 0, 0, .4);
  color: #333;
  font-size: 26px;
  line-height: 34px;
}
.popup b, .popup span { display: block; white-space: nowrap; letter-spacing: -.35px; }
.close { position: absolute; top: 17px; right: 15px; width: 18px; height: 18px; }
.tip { position: absolute; left: 637px; top: 133px; width: 56px; height: 28px; }

.attribution {
  position: absolute;
  right: 0;
  bottom: 0;
  display: flex;
  align-items: center;
  gap: 6px;
  width: 474px;
  height: 34px;
  padding-left: 10px;
  background: rgba(255, 255, 255, .8);
  color: #333;
  font-size: 24px;
  line-height: 34px;
  letter-spacing: .13px;
  white-space: nowrap;
}
.flag { width: 24px; height: 16px; }
.attribution a { color: #2a7ba8; }

.table-wrap {
  overflow: hidden;
  border-radius: 20px;
  background: #2e2e2e;
  box-shadow: 0 8px 16px rgba(0, 0, 0, .2);
}
.devices { width: 3024px; table-layout: fixed; border-collapse: separate; border-spacing: 0; }
.c1 { width: 311px; }
.c2 { width: 330px; }
.c3 { width: 665px; }
.c4 { width: 249px; }
.c5 { width: 426px; }
.c6 { width: 494px; }
.c7 { width: 302px; }
.c8 { width: 247px; }
.devices th {
  height: 87px;
  padding: 0 24px 3px;
  background: #444;
  color: #fff;
  text-align: left;
}
.devices td { height: 110px; padding: 0 24px; border-bottom: 2px solid #444; vertical-align: middle; }
.devices .check { display: block; margin: 0 0 8px 8px; }
.os { display: flex; align-items: center; gap: 10px; }
.os span { padding-bottom: 5px; }
.terminal { width: 60px; height: 46px; margin-left: 92px; }
.trash { width: 32px; height: 45px; margin: 9px 0 0 78px; }
```
